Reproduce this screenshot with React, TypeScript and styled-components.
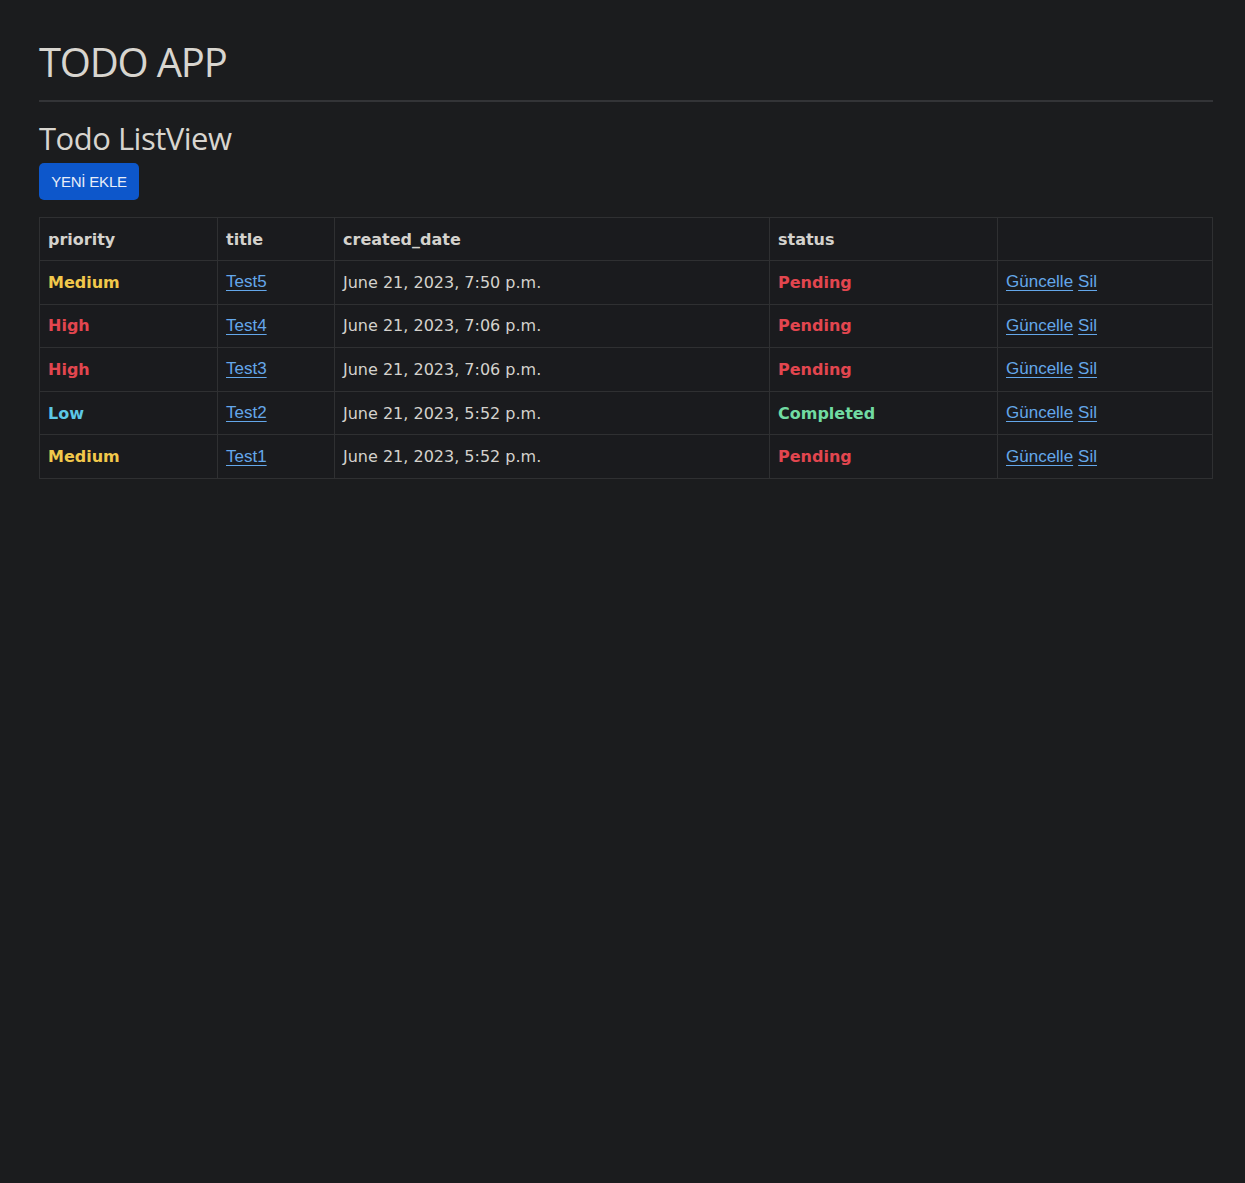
import React from "react";
import styled, { createGlobalStyle } from "styled-components";

const GlobalStyle = createGlobalStyle`
  html, body {
    margin: 0;
    padding: 0;
    background: #1b1c1e;
    min-height: 100%;
  }
  body {
    font-family: "DejaVu Sans", sans-serif;
    color: #d4d2cd;
  }
`;

const Page = styled.div`
  min-height: 1183px;
  box-sizing: border-box;
  padding: 38px 32px 0 39px;
  background: #1b1c1e;
`;

const Title = styled.h1`
  margin: 0;
  font-family: "Open Sans", sans-serif;
  font-weight: 400;
  font-size: 40px;
  line-height: 48px;
  letter-spacing: -1.2px;
  color: #d8d5cf;
`;

const Rule = styled.hr`
  margin: 14px 0 16px;
  border: 0;
  border-top: 2px solid #333437;
`;

const Subtitle = styled.h2`
  margin: 0;
  font-family: "Open Sans", sans-serif;
  font-weight: 400;
  font-size: 31px;
  line-height: 40px;
  letter-spacing: -0.5px;
  color: #d8d5cf;
`;

const Button = styled.button`
  display: block;
  margin-top: 5px;
  width: 100px;
  height: 37px;
  border: 0;
  border-radius: 5px;
  background: #0d57cb;
  color: #e9eef8;
  font-family: "Liberation Sans", sans-serif;
  font-size: 15px;
  letter-spacing: -0.2px;
  padding: 0;
  cursor: pointer;
`;

const Table = styled.table`
  margin-top: 17px;
  width: 100%;
  border-collapse: collapse;
  background: #1a1b1e;
  font-size: 16px;
`;

const Th = styled.th<{ $w?: number }>`
  text-align: left;
  font-weight: 700;
  color: #d4d2cd;
  padding: 0 8px;
  height: 43px;
  border: 1px solid #2f3032;
  width: ${(p) => (p.$w ? `${p.$w}px` : "auto")};
  box-sizing: border-box;
`;

const Td = styled.td`
  padding: 0 8px;
  height: 43.6px;
  border: 1px solid #2f3032;
  color: #d4d2cd;
  box-sizing: border-box;
`;

const colors: Record<string, string> = {
  Medium: "#f1c84b",
  High: "#e2464f",
  Low: "#5cc8e6",
  Pending: "#e2464f",
  Completed: "#71dba2",
};

const Badge = styled.span<{ $c: string }>`
  font-weight: 700;
  color: ${(p) => p.$c};
`;

const Link = styled.a`
  color: #64a7ea;
  text-decoration: underline;
  text-underline-offset: 3px;
  font-family: "Liberation Sans", sans-serif;
  font-size: 17px;
  cursor: pointer;
`;

const Actions = styled.div`
  display: flex;
  gap: 5px;
`;

const rows = [
  { p: "Medium", t: "Test5", d: "June 21, 2023, 7:50 p.m.", s: "Pending" },
  { p: "High", t: "Test4", d: "June 21, 2023, 7:06 p.m.", s: "Pending" },
  { p: "High", t: "Test3", d: "June 21, 2023, 7:06 p.m.", s: "Pending" },
  { p: "Low", t: "Test2", d: "June 21, 2023, 5:52 p.m.", s: "Completed" },
  { p: "Medium", t: "Test1", d: "June 21, 2023, 5:52 p.m.", s: "Pending" },
];

export default function App() {
  return (
    <>
      <GlobalStyle />
      <Page>
        <Title>TODO APP</Title>
        <Rule />
        <Subtitle>Todo ListView</Subtitle>
        <Button>YENİ EKLE</Button>
        <Table>
          <thead>
            <tr>
              <Th $w={178}>priority</Th>
              <Th $w={117}>title</Th>
              <Th $w={435}>created_date</Th>
              <Th $w={228}>status</Th>
              <Th></Th>
            </tr>
          </thead>
          <tbody>
            {rows.map((r, i) => (
              <tr key={i}>
                <Td>
                  <Badge $c={colors[r.p]}>{r.p}</Badge>
                </Td>
                <Td>
                  <Link>{r.t}</Link>
                </Td>
                <Td>{r.d}</Td>
                <Td>
                  <Badge $c={colors[r.s]}>{r.s}</Badge>
                </Td>
                <Td>
                  <Actions>
                    <Link>Güncelle</Link>
                    <Link>Sil</Link>
                  </Actions>
                </Td>
              </tr>
            ))}
          </tbody>
        </Table>
      </Page>
    </>
  );
}
